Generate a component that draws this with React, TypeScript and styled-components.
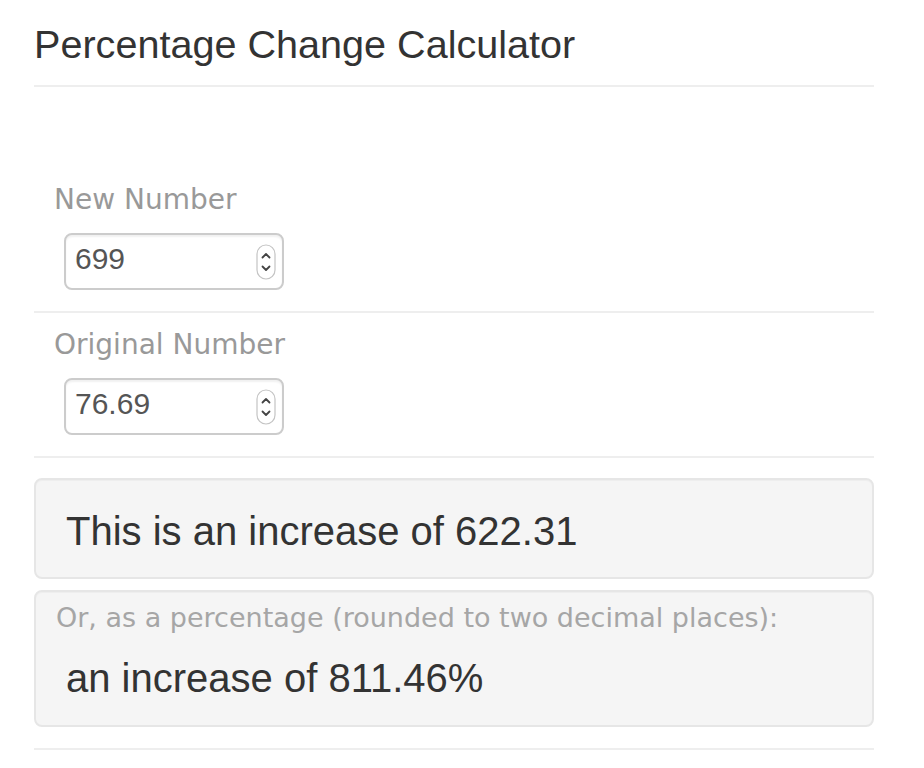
import styled, { createGlobalStyle } from "styled-components";

const GlobalStyle = createGlobalStyle`
    html, body {
        margin: 0;
        padding: 0;
        background: #ffffff;
    }
    * {
        box-sizing: border-box;
    }
`;

const Page = styled.div`
    width: 840px;
    margin-left: 34px;
    padding-bottom: 18px;
    font-family: "Liberation Sans", Arial, sans-serif;
    color: #333333;
`;

const Header = styled.div`
    padding-top: 22px;
    padding-bottom: 19px;
    border-bottom: 2px solid #eeeeee;
    h1 {
        margin: 0;
        font-size: 39.6px;
        line-height: 44px;
        font-weight: normal;
        color: #333333;
    }
`;

const Form = styled.div`
    margin-top: 81px;
`;

const Group = styled.div`
    padding-top: 15px;
    padding-bottom: 21px;
    border-bottom: 2px solid #eeeeee;
`;

const Label = styled.label`
    display: block;
    padding-left: 20px;
    font-family: "DejaVu Sans", Verdana, sans-serif;
    font-size: 28px;
    line-height: 33px;
    color: #999999;
`;

const Field = styled.div`
    position: relative;
    width: 220px;
    height: 57px;
    margin-top: 17px;
    margin-left: 30px;
`;

const NumberInput = styled.input`
    width: 100%;
    height: 100%;
    padding: 0 40px 6px 9px;
    border: 2px solid #cccccc;
    border-radius: 8px;
    box-shadow: inset 0 2px 2px rgba(0, 0, 0, 0.06);
    background: #ffffff;
    font-family: "Liberation Sans", Arial, sans-serif;
    font-size: 30px;
    color: #555555;
    outline: none;
`;

const Spinner = styled.svg`
    position: absolute;
    right: 8px;
    top: 11px;
`;

const Results = styled.div`
    padding-top: 20px;
`;

const Well = styled.div<{ $pad: number }>`
    background: #f5f5f5;
    border: 2px solid #e6e6e6;
    border-radius: 8px;
    box-shadow: inset 0 1px 1px rgba(0, 0, 0, 0.03);
    padding: ${(p) => (p.$pad === 30 ? "29px 30px 24px" : "10px 20px 25px")};
    & + & {
        margin-top: 11px;
    }
`;

const Note = styled.p`
    margin: 0;
    font-family: "DejaVu Sans", Verdana, sans-serif;
    font-size: 27px;
    line-height: 32px;
    color: #a6a6a6;
`;

const Answer = styled.p<{ $indent?: boolean }>`
    margin: ${(p) => (p.$indent ? "22px 0 0 10px" : "0")};
    font-size: 40px;
    line-height: 44px;
    color: #333333;
`;

const Rule = styled.hr`
    margin: 21px 0 0;
    border: 0;
    border-top: 2px solid #eeeeee;
`;

const SpinIcon = () => (
    <Spinner width="20" height="36" viewBox="0 0 20 36">
        <rect x="1" y="1" width="18" height="34" rx="9" fill="#ffffff" stroke="#c4c4c4" strokeWidth="1.2" />
        <path d="M6.5 13.5 L10 10 L13.5 13.5" fill="none" stroke="#444" strokeWidth="1.8" strokeLinecap="round" strokeLinejoin="round" />
        <path d="M6.5 22.5 L10 26 L13.5 22.5" fill="none" stroke="#444" strokeWidth="1.8" strokeLinecap="round" strokeLinejoin="round" />
    </Spinner>
);

const NumberField = ({ id, value }: { id: string; value: string }) => (
    <Field>
        <NumberInput id={id} type="text" value={value} readOnly />
        <SpinIcon />
    </Field>
);

const App = () => {
    return (
        <>
            <GlobalStyle />
            <Page>
                <Header>
                    <h1>Percentage Change Calculator</h1>
                </Header>
                <Form>
                    <Group>
                        <Label htmlFor="newnum">New Number</Label>
                        <NumberField id="newnum" value="699" />
                    </Group>
                    <Group>
                        <Label htmlFor="orignum">Original Number</Label>
                        <NumberField id="orignum" value="76.69" />
                    </Group>
                </Form>
                <Results>
                    <Well $pad={30}>
                        <Answer>This is an increase of 622.31</Answer>
                    </Well>
                    <Well $pad={20}>
                        <Note>Or, as a percentage (rounded to two decimal places):</Note>
                        <Answer $indent>an increase of 811.46%</Answer>
                    </Well>
                </Results>
                <Rule />
            </Page>
        </>
    );
};

export default App;
